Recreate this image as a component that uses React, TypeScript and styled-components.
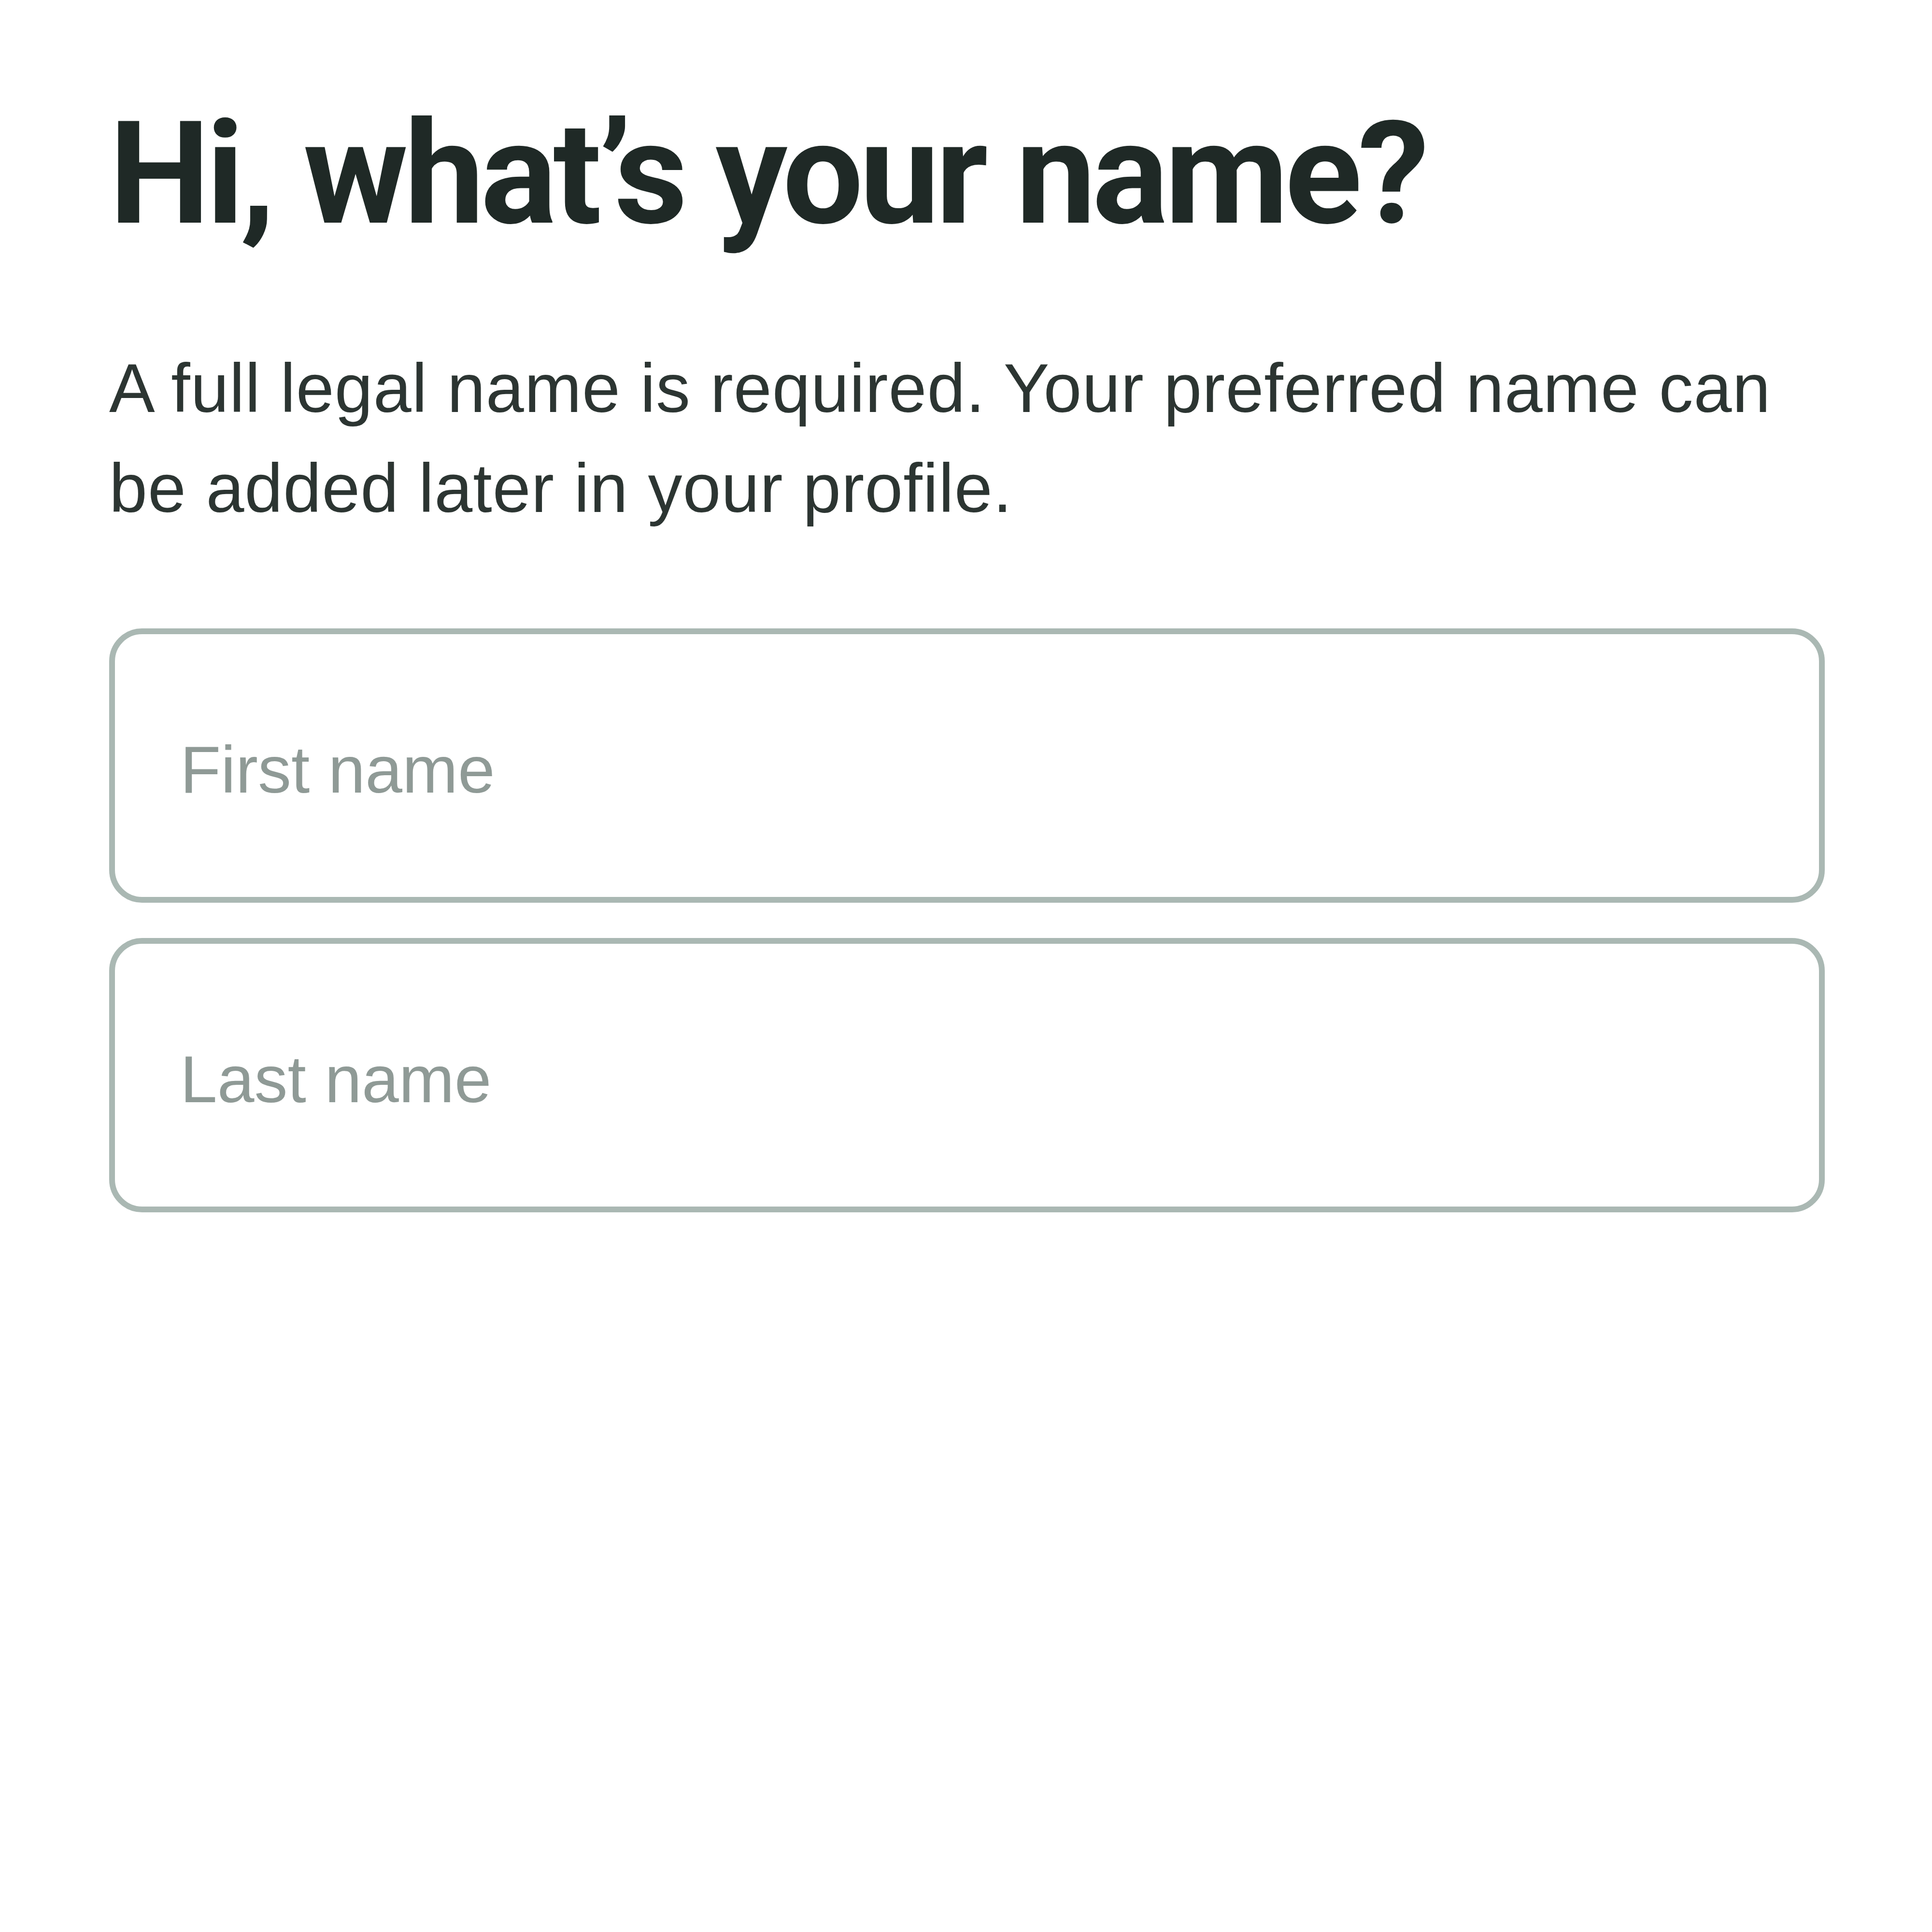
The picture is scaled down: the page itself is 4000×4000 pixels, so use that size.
import React from "react";
import styled, { createGlobalStyle } from "styled-components";

const GlobalStyle = createGlobalStyle`
  html, body {
    margin: 0;
    padding: 0;
    background: #ffffff;
  }
`;

export default function App() {
  return (
    <>
      <GlobalStyle />
      <Screen>
        <Title>Hi, what’s your name?</Title>
        <Intro>
          A full legal name is required. Your preferred name can be added later
          in your profile.
        </Intro>
        <Fields>
          <NameInput type="text" placeholder="First name" />
          <NameInput type="text" placeholder="Last name" />
        </Fields>
      </Screen>
    </>
  );
}

const Screen = styled.main`
  width: 4000px;
  height: 4000px;
  box-sizing: border-box;
  padding: 182px 222px 0 226px;
  background: #ffffff;
  display: flex;
  flex-direction: column;
`;

const Title = styled.h1`
  margin: 0;
  font-family: Roboto, "Liberation Sans", Arial, sans-serif;
  font-weight: 700;
  font-size: 296px;
  line-height: 1.2;
  letter-spacing: -0.027em;
  color: #1f2926;
`;

const Intro = styled.p`
  margin: 163px 0 0;
  width: 3500px;
  font-family: "Liberation Sans", Arial, sans-serif;
  font-size: 142px;
  line-height: 207px;
  letter-spacing: 1px;
  color: #2c3532;
`;

const Fields = styled.div`
  margin-top: 187px;
  display: flex;
  flex-direction: column;
  gap: 73px;
`;

const NameInput = styled.input`
  width: 100%;
  height: 568px;
  box-sizing: border-box;
  border: 12px solid #aab8b3;
  border-radius: 68px;
  padding: 16px 135px 0;
  background: #ffffff;
  outline: none;
  font-family: "Liberation Sans", Arial, sans-serif;
  font-size: 138px;
  color: #1f2926;

  &::placeholder {
    color: #8f9a96;
    opacity: 1;
  }
`;
